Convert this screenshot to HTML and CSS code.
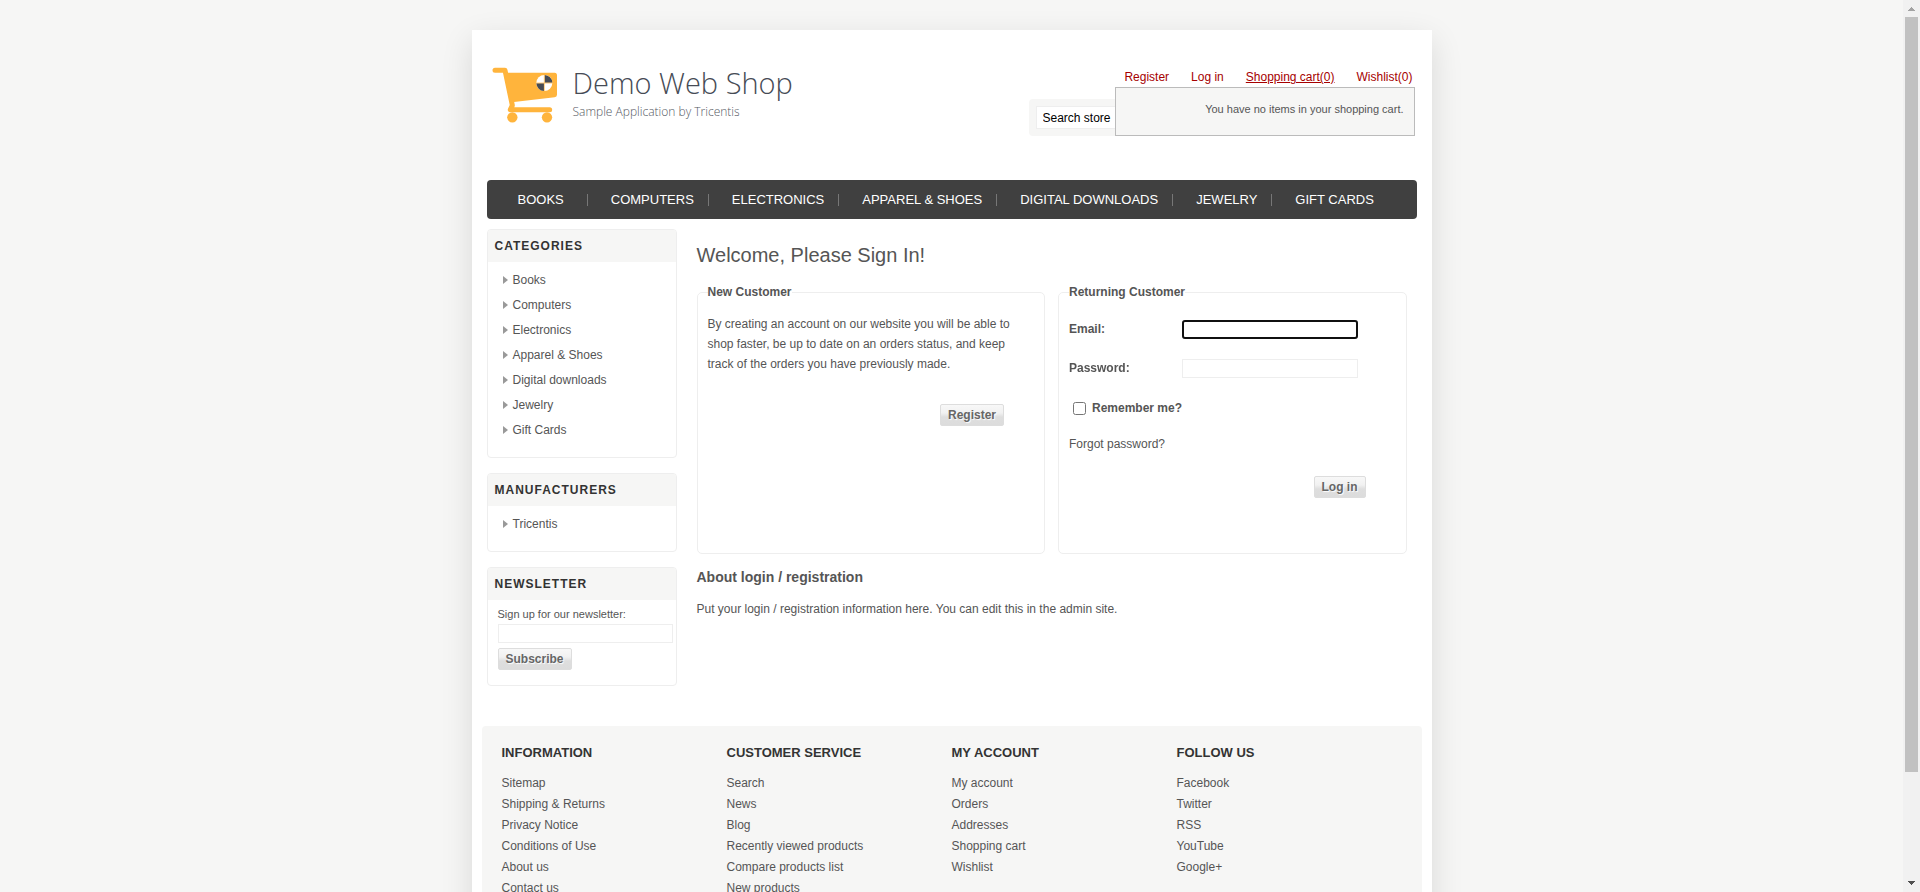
FILE: index.html
```html
<!DOCTYPE html>
<html lang="en">
<head>
<meta charset="utf-8">
<title>Demo Web Shop. Login</title>
<link rel="stylesheet" href="styles.css">
</head>
<body>
<div class="viewport">
<div class="scroller">
<div class="page">
  <header class="header">
    <a class="logo" href="#">
      <svg class="logo-mark" viewBox="96 141 198 168" aria-hidden="true">
        <g fill="none" stroke="#ffb43c" stroke-linecap="round" stroke-linejoin="round">
          <path d="M105 151H135L157 256L151 269H269" stroke-width="15"/>
        </g>
        <path d="M131 158H284Q291 158 291 166V224Q291 231 284 232L162 246L153 262Z" fill="#ffb43c"/>
        <circle cx="157" cy="292" r="15.500" fill="#ffb43c"/>
        <circle cx="261" cy="292" r="15.500" fill="#ffb43c"/>
        <circle cx="253" cy="189" r="24" fill="#fff"/>
        <path d="M254 188V165A24 24 0 0 1 277 188ZM252 190V213A24 24 0 0 1 229 190Z" fill="#464b55"/>
        <path d="M253 165V213M229 189H277" stroke="#ffb43c" stroke-width="2"/>
      </svg>
      <span class="logo-text">
        <span class="logo-name">Demo Web Shop</span>
        <span class="logo-tag">Sample Application by Tricentis</span>
      </span>
    </a>
    <div class="header-tools">
      <nav class="header-links">
        <a href="#">Register</a>
        <a href="#">Log in</a>
        <a class="active" href="#">Shopping cart(0)</a>
        <a href="#">Wishlist(0)</a>
      </nav>
      <div class="flyout">You have no items in your shopping cart.</div>
      <form class="search">
        <input class="search-box" type="text" value="Search store" aria-label="Search store">
      </form>
    </div>
  </header>

  <nav class="menu">
    <a href="#">BOOKS</a>
    <a href="#">COMPUTERS</a>
    <a href="#">ELECTRONICS</a>
    <a href="#">APPAREL &amp; SHOES</a>
    <a href="#">DIGITAL DOWNLOADS</a>
    <a href="#">JEWELRY</a>
    <a href="#">GIFT CARDS</a>
  </nav>

  <div class="columns">
    <aside class="side">
      <section class="block">
        <h2>CATEGORIES</h2>
        <ul class="list">
          <li><a href="#">Books</a></li>
          <li><a href="#">Computers</a></li>
          <li><a href="#">Electronics</a></li>
          <li><a href="#">Apparel &amp; Shoes</a></li>
          <li><a href="#">Digital downloads</a></li>
          <li><a href="#">Jewelry</a></li>
          <li><a href="#">Gift Cards</a></li>
        </ul>
      </section>
      <section class="block">
        <h2>MANUFACTURERS</h2>
        <ul class="list">
          <li><a href="#">Tricentis</a></li>
        </ul>
      </section>
      <section class="block">
        <h2>NEWSLETTER</h2>
        <form class="newsletter">
          <label for="newsletter-email">Sign up for our newsletter:</label>
          <input class="field" id="newsletter-email" type="text">
          <button class="button" type="button">Subscribe</button>
        </form>
      </section>
    </aside>

    <main class="main">
      <h1>Welcome, Please Sign In!</h1>
      <div class="panels">
        <fieldset class="panel">
          <legend>New Customer</legend>
          <p>By creating an account on our website you will be able to shop faster, be up to date on an orders status, and keep track of the orders you have previously made.</p>
          <div class="actions"><button class="button" type="button">Register</button></div>
        </fieldset>
        <fieldset class="panel">
          <legend>Returning Customer</legend>
          <form class="login">
            <div class="row">
              <label for="email">Email:</label>
              <input class="field current" id="email" type="text" autofocus>
            </div>
            <div class="row">
              <label for="password">Password:</label>
              <input class="field" id="password" type="password">
            </div>
            <div class="remember">
              <input id="remember" type="checkbox">
              <label for="remember">Remember me?</label>
            </div>
            <a class="forgot" href="#">Forgot password?</a>
            <div class="login-actions"><button class="button" type="button">Log in</button></div>
          </form>
        </fieldset>
      </div>
      <h2 class="about">About login / registration</h2>
      <p class="about-text">Put your login / registration information here. You can edit this in the admin site.</p>
    </main>
  </div>

  <footer class="footer">
    <section>
      <h3>INFORMATION</h3>
      <ul>
        <li><a href="#">Sitemap</a></li>
        <li><a href="#">Shipping &amp; Returns</a></li>
        <li><a href="#">Privacy Notice</a></li>
        <li><a href="#">Conditions of Use</a></li>
        <li><a href="#">About us</a></li>
        <li><a href="#">Contact us</a></li>
      </ul>
    </section>
    <section>
      <h3>CUSTOMER SERVICE</h3>
      <ul>
        <li><a href="#">Search</a></li>
        <li><a href="#">News</a></li>
        <li><a href="#">Blog</a></li>
        <li><a href="#">Recently viewed products</a></li>
        <li><a href="#">Compare products list</a></li>
        <li><a href="#">New products</a></li>
      </ul>
    </section>
    <section>
      <h3>MY ACCOUNT</h3>
      <ul>
        <li><a href="#">My account</a></li>
        <li><a href="#">Orders</a></li>
        <li><a href="#">Addresses</a></li>
        <li><a href="#">Shopping cart</a></li>
        <li><a href="#">Wishlist</a></li>
      </ul>
    </section>
    <section>
      <h3>FOLLOW US</h3>
      <ul>
        <li><a href="#">Facebook</a></li>
        <li><a href="#">Twitter</a></li>
        <li><a href="#">RSS</a></li>
        <li><a href="#">YouTube</a></li>
        <li><a href="#">Google+</a></li>
      </ul>
    </section>
  </footer>
</div>
</div>
<div class="scrollbar" aria-hidden="true">
  <svg viewBox="0 0 17 17"><path d="M5 11H12V10H11V9H10V8H9V7H8V8H7V9H6V10H5Z" fill="#a3a3a3"/></svg>
  <div class="track"><div class="thumb"></div></div>
  <svg viewBox="0 0 17 17"><path d="M5 6H12V7H11V8H10V9H9V10H8V9H7V8H6V7H5Z" fill="#505050"/></svg>
</div>
</div>
</body>
</html>
```
FILE: styles.css
```css
* { box-sizing: border-box; }
body {
  margin: 0;
  background: #f6f6f5;
  color: #555;
  font: 12px/20px "Liberation Sans", Arial, sans-serif;
}
a { color: #555; text-decoration: none; }
ul { list-style: none; margin: 0; padding: 0; }
h1, h2, h3, p { margin: 0; }
input, button { font: inherit; }

.viewport { display: grid; grid-template-columns: 1fr 17px; height: 100vh; }
.scroller { overflow: auto; scrollbar-width: none; padding-top: 30px; }
.page {
  max-width: 960px;
  margin: 0 auto;
  padding: 0 10px 30px;
  background: #fff;
  box-shadow: 0 10px 30px rgba(0, 0, 0, 0.12);
}

/* Header */
.header { display: flex; justify-content: space-between; height: 150px; padding: 0 5px; }
.logo { display: flex; align-items: flex-start; gap: 15px; padding: 37px 0 0 5px; }
.logo-mark { width: 66px; height: 56px; }
.logo-text { display: flex; flex-direction: column; font-family: "Open Sans", sans-serif; font-weight: 300; }
.logo-name { font-size: 29px; line-height: 32px; color: #464b55; }
.logo-tag { font-size: 12px; line-height: 26px; color: #55585f; }
.header-tools { position: relative; width: 388px; padding: 37px 2px 0 0; }
.header-links { display: flex; justify-content: flex-end; gap: 22px; padding-right: 2px; }
.header-links a { color: #a60000; }
.header-links .active { text-decoration: underline; }
.search { margin-top: 12px; padding: 7px; background: #f6f6f5; border-radius: 4px; }
.search-box {
  display: block;
  width: 156px;
  height: 23px;
  padding: 0 6px;
  border: 1px solid #eee;
  background: #fff;
  color: #000;
}
.flyout {
  position: absolute;
  top: 57px;
  right: 2px;
  width: 300px;
  height: 49px;
  padding: 11px 10px;
  border: 1px solid #bbb;
  background: #f6f6f5;
  font-size: 11px;
  text-align: right;
}

/* Top menu */
.menu {
  display: flex;
  align-items: center;
  height: 39px;
  margin: 0 5px;
  padding: 0 8px;
  border-radius: 4px;
  background: #404040;
}
.menu a {
  padding: 0 14px 0 23px;
  border-right: 1px solid #777;
  color: #fff;
  font-size: 13px;
  line-height: 12px;
}
.menu a:first-child { padding-right: 23px; }
.menu a:last-child { border-right: 0; }

/* Columns */
.columns { display: flex; gap: 20px; padding: 10px 5px 40px; }
.side { display: flex; flex: 0 0 190px; flex-direction: column; gap: 15px; }
.block { border: 1px solid #eee; border-radius: 4px; overflow: hidden; }
.block h2 {
  padding: 6px 7px;
  background: #f6f6f5;
  color: #333;
  font-size: 12px;
  line-height: 20px;
  letter-spacing: 1px;
}
.list { padding: 5px 12px 15px 15px; }
.list li { display: flex; align-items: center; gap: 5px; height: 25px; }
.list li::before {
  content: "";
  border: solid transparent;
  border-width: 4px 0 4px 5px;
  border-left-color: #999;
}
.newsletter { display: flex; flex-direction: column; align-items: flex-start; padding: 4px 3px 15px 10px; }
.newsletter label { font-size: 11px; }
.newsletter .field { width: 100%; margin-bottom: 5px; }
.field { height: 19px; padding: 1px 2px; border: 1px solid #eee; background: #fff; }
.current { outline: 2px solid #101010; outline-offset: -2px; border-radius: 3px; }
.button {
  height: 22px;
  padding: 0 7px;
  border: 1px solid #ddd;
  border-radius: 2px;
  background: linear-gradient(#f8f8f8, #f1f1f1 40%, #dedede 60%, #dcdcdc);
  color: #666;
  font-weight: bold;
  line-height: 20px;
  text-shadow: 1px 1px 1px #fff;
}

.main { flex: 1; padding: 16px 10px 0 0; }
h1 { font-size: 20px; font-weight: normal; line-height: 20px; }
.panels { display: flex; gap: 13px; padding-top: 17px; }
.panel {
  flex: 1;
  min-width: 0;
  min-height: 272px;
  margin: 0;
  padding: 12px 10px 0;
  border: 1px solid #eee;
  border-radius: 5px;
}
.panel legend { padding: 0; font-weight: bold; }
.panel p { padding-right: 15px; }
.actions { display: flex; justify-content: flex-end; padding: 30px 30px 0 0; }
.row { display: flex; align-items: center; height: 20px; margin: 5px 0 19px; font-weight: bold; }
.row + .row { margin-bottom: 0; }
.row label { flex: 0 0 113px; }
.row .field { width: 176px; }
.remember { display: flex; align-items: center; gap: 6px; padding-top: 20px; font-weight: bold; }
.remember input { width: 13px; height: 13px; margin: 0 0 0 4px; }
.forgot { display: block; padding-top: 16px; }
.login-actions { display: flex; justify-content: flex-end; padding: 22px 30px 0 0; }
.about { padding-top: 13px; font-size: 14px; line-height: 20px; }
.about-text { padding-top: 12px; }

/* Footer */
.footer {
  display: grid;
  grid-template-columns: repeat(4, 225px);
  min-height: 230px;
  padding: 17px 20px;
  border-radius: 4px;
  background: #f6f6f5;
}
.footer h3 { margin-bottom: 10px; color: #333; font-size: 13px; line-height: 20px; }
.footer li { line-height: 21px; }

/* Scrollbar */
.scrollbar { display: grid; grid-template-rows: 17px 1fr 17px; background: #f1f1f1; }
.scrollbar svg { display: block; }
.track { padding: 0 2px; }
.thumb { height: 88%; background: #c1c1c1; }
```
